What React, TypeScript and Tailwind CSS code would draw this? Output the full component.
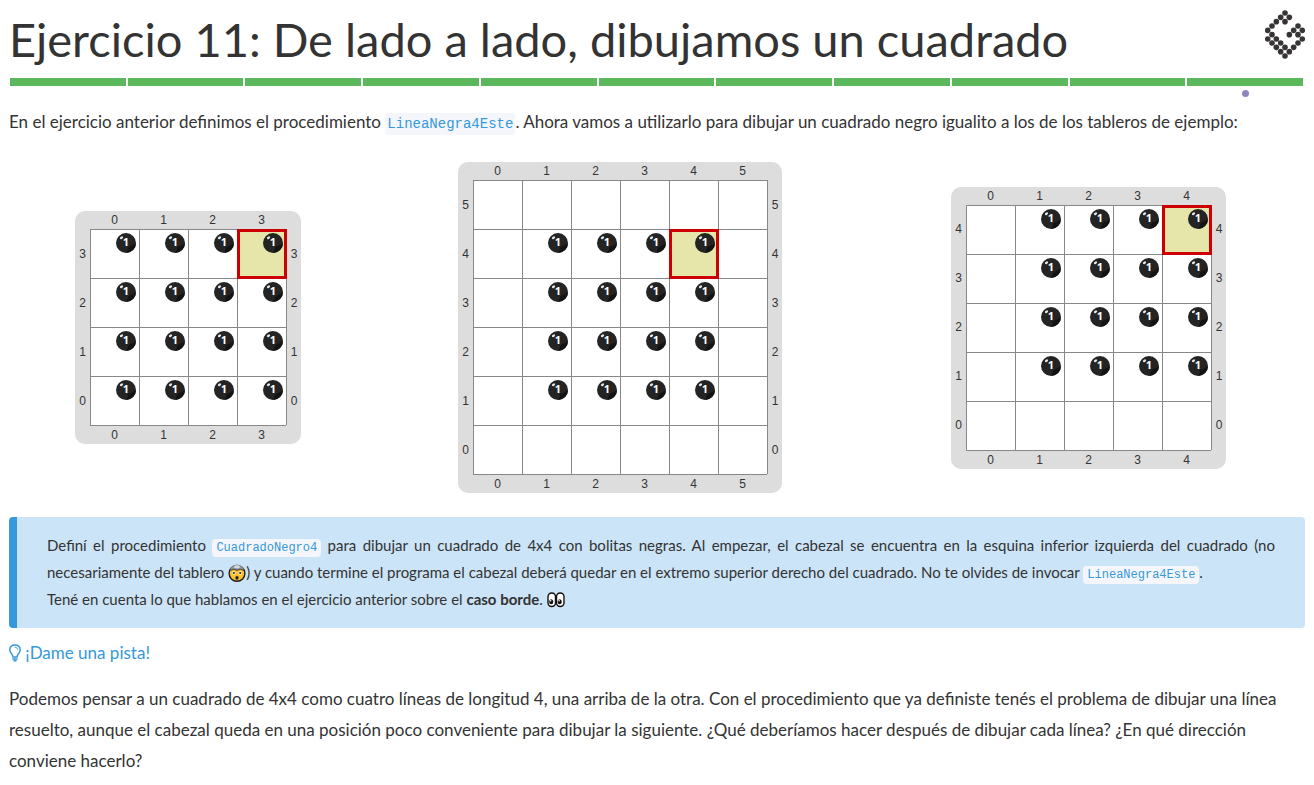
import React from "react";

type BoardProps = {
  size: number;
  head: [number, number];
  isFilled: (x: number, y: number) => boolean;
};

const range = (n: number) => Array.from({ length: n }, (_, i) => i);

function Ball() {
  return (
    <svg viewBox="0 0 20 20" className="ml-auto mr-[3px] block size-5">
      <circle cx="10" cy="10" r="10" fill="#242424" />
      <path d="M20 10.500A10 10 0 0 1 10.500 20L12.500 14Z" fill="#131313" />
      <ellipse cx="5.500" cy="4.800" rx="1.800" ry="1.200" fill="#e8e8e8" transform="rotate(-35 5.500 4.800)" />
      <text x="10" y="13" textAnchor="middle" fill="#fff" className="font-['Open_Sans',sans-serif] text-[11px] font-bold">
        1
      </text>
    </svg>
  );
}

function Board({ size, head, isFilled }: BoardProps) {
  const columns = range(size);
  const rows = range(size).reverse();
  return (
    <table className="border-separate border-spacing-0 rounded-[10px] bg-[#ddd] text-center font-['Liberation_Sans',sans-serif] text-xs leading-4 text-[#333]">
      <thead>
        <tr className="h-[18px]">
          <td className="p-0" />
          {columns.map((x) => (
            <th key={x} scope="col" className="p-0 font-normal">{x}</th>
          ))}
          <td className="p-0" />
        </tr>
      </thead>
      <tbody>
        {rows.map((y) => (
          <tr key={y}>
            <th scope="row" className="w-[15px] p-0 font-normal">{y}</th>
            {columns.map((x) => {
              const isHead = head[0] === x && head[1] === y;
              return (
                <td
                  key={x}
                  className={`relative size-[49px] border-l border-t border-[#888] p-0 pt-[3px] align-top ${isHead ? "bg-[#e6e6aa]" : "bg-white"}`}
                >
                  {isHead && <span className="absolute -inset-px z-10 border-3 border-[#cc0000]" />}
                  {isFilled(x, y) && <Ball />}
                </td>
              );
            })}
            <th scope="row" className="w-[15px] border-l border-[#888] p-0 font-normal">{y}</th>
          </tr>
        ))}
      </tbody>
      <tfoot>
        <tr className="h-[19px]">
          <td className="p-0" />
          {columns.map((x) => (
            <th key={x} scope="col" className="border-t border-[#888] p-0 font-normal">{x}</th>
          ))}
          <td className="p-0" />
        </tr>
      </tfoot>
    </table>
  );
}

const logoDots = [
  [213, 37], [200, 50], [226, 50], [187, 63], [213, 63], [174, 76], [161, 89], [174, 102],
  [161, 115], [187, 115], [174, 127], [200, 127], [187, 140], [213, 140], [200, 153],
  [226, 153], [213, 166], [239, 140], [252, 127], [265, 115], [252, 102], [265, 89],
  [252, 76], [239, 89], [226, 102],
];

function Logo() {
  return (
    <svg viewBox="153 28 120 147" className="mt-[10px] h-[49px] w-10 shrink-0" role="img">
      {logoDots.map(([cx, cy]) => (
        <circle key={`${cx}-${cy}`} cx={cx} cy={cy} r="8.400" fill="#373435" />
      ))}
    </svg>
  );
}

function ExplodingHead() {
  return (
    <svg viewBox="0 0 18 18" className="inline-block size-[18px] align-[-4px]">
      <circle cx="9" cy="9.300" r="7.900" fill="#fcc02e" stroke="#1c1c1c" strokeWidth="1.400" />
      <path d="M2.200 6.300C2.300 3.400 5 .8 9 .8s6.700 2.600 6.800 5.500L12.500 5.300 9 6.200 5.500 5.300Z" fill="#8f9598" />
      <path d="M5.600 3.400C6.300 1.800 8 1.200 9 1.200s2.700.6 3.400 2.200L9 4.600Z" fill="#d5d8da" />
      <path d="M2.200 6.500 5.500 5.300 9 6.300l3.500-1 3.300 1.200" fill="none" stroke="#333" strokeWidth=".9" />
      <circle cx="5.800" cy="9" r="1.700" fill="#fff" />
      <circle cx="12.200" cy="9" r="1.700" fill="#fff" />
      <circle cx="5.800" cy="9" r="1.100" fill="#222" />
      <circle cx="12.200" cy="9" r="1.100" fill="#222" />
      <ellipse cx="9" cy="13.800" rx="1.700" ry="1.900" fill="#222" />
    </svg>
  );
}

function Eyes() {
  return (
    <svg viewBox="0 0 18 18" className="inline-block size-[18px] align-[-4px]">
      <rect x="1" y="2" width="7.500" height="13.500" rx="3.700" fill="#fff" stroke="#111" strokeWidth="1.400" />
      <rect x="9.500" y="2" width="7.500" height="13.500" rx="3.700" fill="#fff" stroke="#111" strokeWidth="1.400" />
      <ellipse cx="4.200" cy="10.700" rx="2.100" ry="2.500" fill="#111" />
      <ellipse cx="12.700" cy="10.700" rx="2.100" ry="2.500" fill="#111" />
      <circle cx="3.600" cy="9.700" r=".8" fill="#fff" />
      <circle cx="12.100" cy="9.700" r=".8" fill="#fff" />
    </svg>
  );
}

function Bulb() {
  return (
    <svg viewBox="0 0 12 18" className="inline-block h-[18px] w-3 align-[-3px]" fill="none" stroke="#3498db" strokeWidth="1.500" strokeLinecap="round">
      <path d="M3.800 12.300C3.700 10.300.8 9 .8 5.700.8 2.700 3.200.9 6 .9s5.200 1.800 5.200 4.800c0 3.300-2.900 4.600-3 6.600" />
      <path d="M6 3.300c1.300 0 2.500.7 2.500 2" strokeWidth="1" />
      <path d="M3.900 13h4.200M3.900 14.900h4.200M5 16.700h2" />
    </svg>
  );
}

export default function App() {
  return (
    <main className="px-[9px] font-['Lato',sans-serif] text-[17px] leading-[31px] text-[#333]">
      <header>
        <div className="flex h-[78px] items-start justify-between">
          <h1 className="pt-[10px] text-[47px] leading-[58px]">Ejercicio 11: De lado a lado, dibujamos un cuadrado</h1>
          <Logo />
        </div>
        <div className="relative flex gap-0.5 pl-px pr-0.5">
          {range(11).map((i) => (
            <span key={i} className="h-2 flex-1 bg-[#5cb85c]" />
          ))}
          <span className="absolute right-14 top-3 size-[7px] rounded-full bg-[#9085c0]" />
        </div>
      </header>

      <p className="mt-5">
        En el ejercicio anterior definimos el procedimiento{" "}
        <code className="rounded bg-[#f5f6fb] px-0.5 py-[3px] font-['Liberation_Mono',monospace] text-sm text-[#3498db]">LineaNegra4Este</code>
        . Ahora vamos a utilizarlo para dibujar un cuadrado negro igualito a los de los tableros de ejemplo:
      </p>

      <section className="mt-[25px] grid grid-cols-[358fr_506fr_431fr] items-center justify-items-center pr-px">
        <Board size={4} head={[3, 3]} isFilled={() => true} />
        <Board size={6} head={[4, 4]} isFilled={(x, y) => x >= 1 && x <= 4 && y >= 1 && y <= 4} />
        <Board size={5} head={[4, 4]} isFilled={(x, y) => x >= 1 && y >= 1} />
      </section>

      <section className="mt-6 rounded border-l-8 border-[#3498db] bg-[#cce4f7] px-[30px] py-[15px] text-justify text-[15px] leading-[27px]">
        <p>
          Definí el procedimiento{" "}
          <code className="rounded bg-[#f5f6fb] px-1 py-0.5 font-['Liberation_Mono',monospace] text-xs text-[#3498db]">CuadradoNegro4</code>{" "}
          para dibujar un cuadrado de 4x4 con bolitas negras. Al empezar, el cabezal se encuentra en la esquina inferior
          izquierda del cuadrado (no necesariamente del tablero <ExplodingHead />) y cuando termine el programa el cabezal
          deberá quedar en el extremo superior derecho del cuadrado. No te olvides de invocar{" "}
          <code className="rounded bg-[#f5f6fb] px-1 py-0.5 font-['Liberation_Mono',monospace] text-xs text-[#3498db]">LineaNegra4Este</code>.
        </p>
        <p>
          Tené en cuenta lo que hablamos en el ejercicio anterior sobre el <strong>caso borde</strong>. <Eyes />
        </p>
      </section>

      <a href="#pista" className="mt-[9px] inline-block text-[#3498db]">
        <Bulb /> ¡Dame una pista!
      </a>
      <p id="pista" className="mt-[15px]">
        Podemos pensar a un cuadrado de 4x4 como cuatro líneas de longitud 4, una arriba de la otra. Con el procedimiento
        que ya definiste tenés el problema de dibujar una línea resuelto, aunque el cabezal queda en una posición poco
        conveniente para dibujar la siguiente. ¿Qué deberíamos hacer después de dibujar cada línea? ¿En qué dirección
        conviene hacerlo?
      </p>
    </main>
  );
}
